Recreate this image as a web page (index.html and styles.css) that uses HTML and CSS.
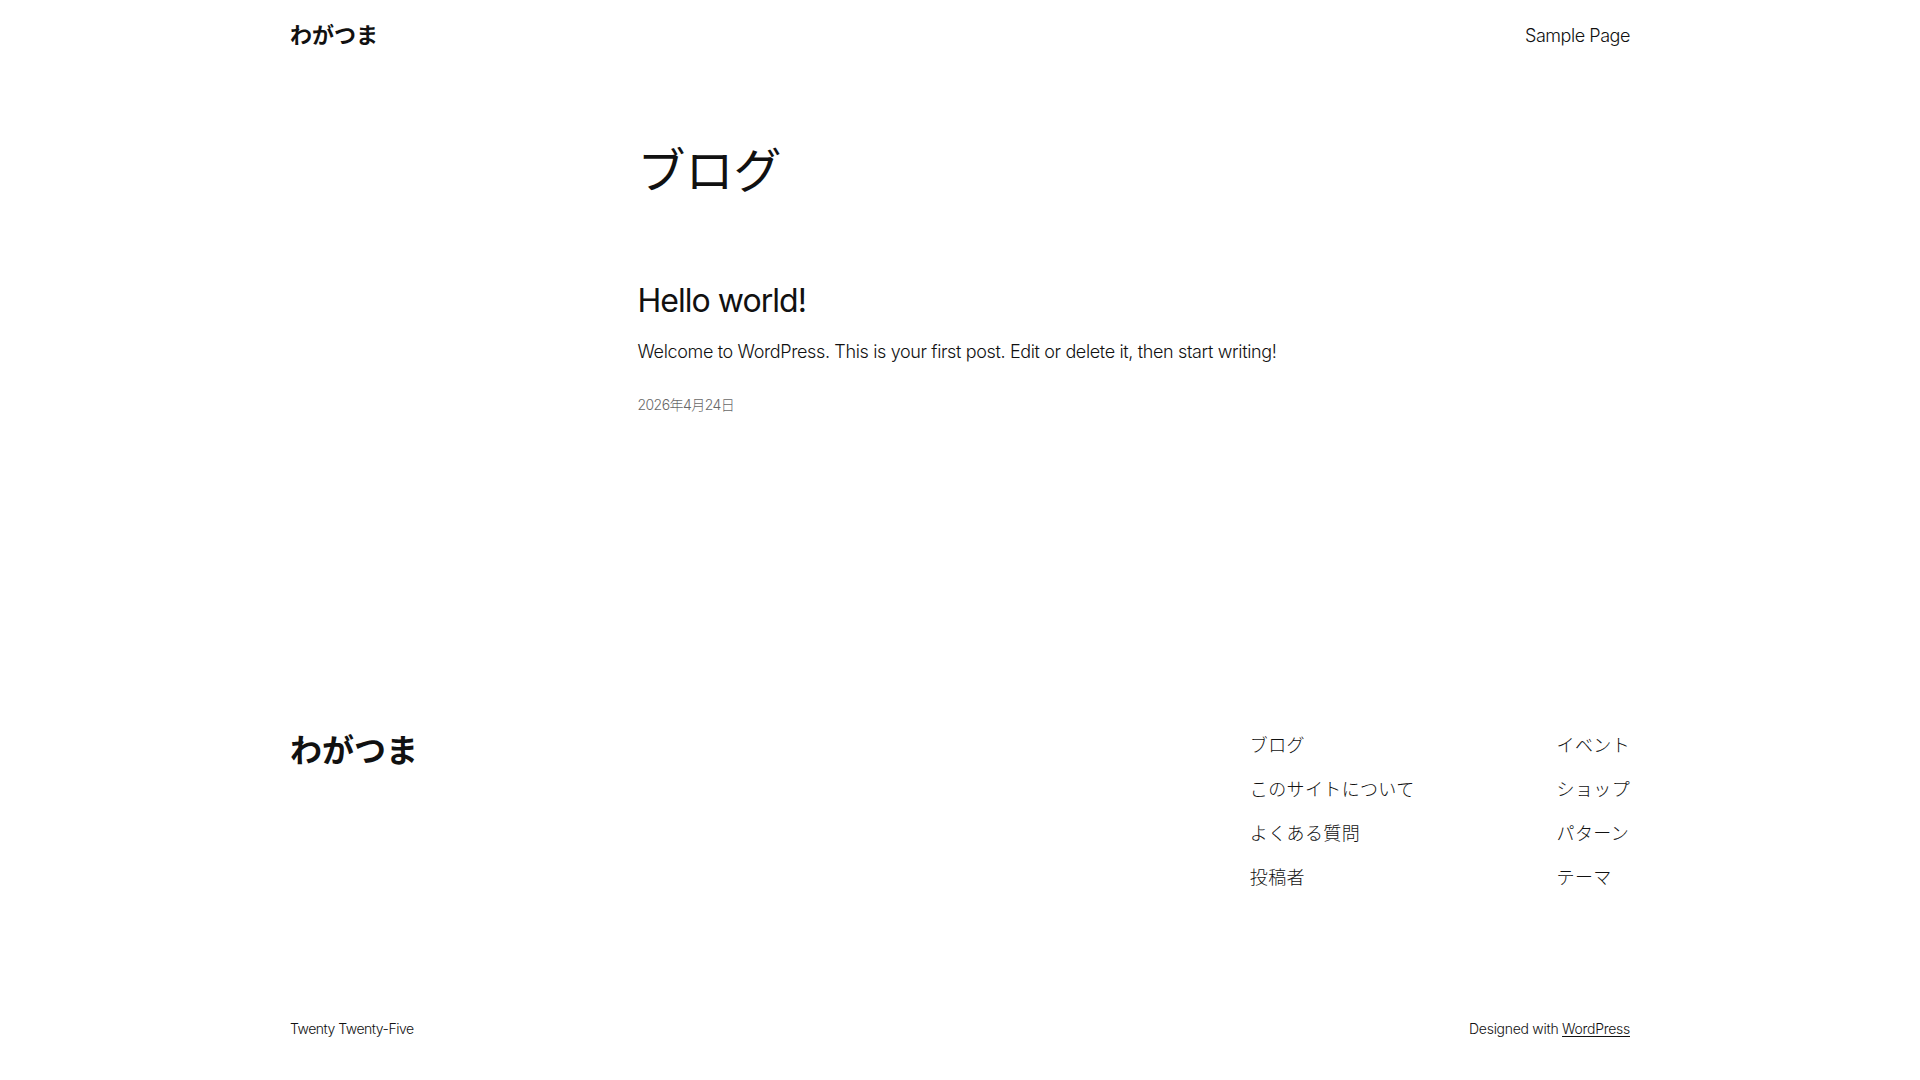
FILE: index.html
```html
<!DOCTYPE html>
<html lang="ja">
<head>
<meta charset="utf-8">
<title>ブログ – わがつま</title>
<link rel="stylesheet" href="styles.css">
</head>
<body>
<header class="site-header">
  <a class="site-title" href="#">わがつま</a>
  <nav class="header-nav"><a href="#">Sample Page</a></nav>
</header>
<main class="site-main">
  <h1 class="page-title">ブログ</h1>
  <article class="post">
    <h2 class="post-title"><a href="#">Hello world!</a></h2>
    <p class="post-excerpt">Welcome to WordPress. This is your first post. Edit or delete it, then start writing!</p>
    <time class="post-date">2026年4月24日</time>
  </article>
</main>
<footer class="site-footer">
  <div class="footer-top">
    <a class="footer-title" href="#">わがつま</a>
    <div class="footer-navs">
      <ul class="footer-nav">
        <li><a href="#">ブログ</a></li>
        <li><a href="#">このサイトについて</a></li>
        <li><a href="#">よくある質問</a></li>
        <li><a href="#">投稿者</a></li>
      </ul>
      <ul class="footer-nav">
        <li><a href="#">イベント</a></li>
        <li><a href="#">ショップ</a></li>
        <li><a href="#">パターン</a></li>
        <li><a href="#">テーマ</a></li>
      </ul>
    </div>
  </div>
  <div class="footer-bottom">
    <span class="credit-theme">Twenty Twenty-Five</span>
    <span class="credit-wp">Designed with <a href="#">WordPress</a></span>
  </div>
</footer>
</body>
</html>
```
FILE: styles.css
```css
html, body {
  margin: 0;
  padding: 0;
  background: #ffffff;
}
body {
  font-family: Inter, "Noto Sans CJK JP", sans-serif;
  font-weight: 300;
  color: #111111;
  -webkit-font-smoothing: antialiased;
}
a {
  color: inherit;
  text-decoration: none;
}
.site-header {
  width: 1340px;
  margin: 0 auto;
  height: 70px;
  display: flex;
  align-items: center;
  justify-content: space-between;
}
.site-title {
  font-size: 22px;
  font-weight: 700;
  line-height: 1.2;
}
.header-nav {
  font-size: 18px;
  line-height: 1.5;
  letter-spacing: -0.025em;
}
.site-main {
  width: 645px;
  margin: 0 auto;
  padding-top: 72px;
}
.page-title {
  margin: 0;
  font-size: 48px;
  font-weight: 400;
  line-height: 1.2;
}
.post {
  margin-top: 82px;
}
.post-title {
  margin: 0;
  font-size: 32px;
  font-weight: 400;
  line-height: 1.2;
  letter-spacing: -0.03em;
}
.post-excerpt {
  margin: 18px 0 0;
  font-size: 18px;
  line-height: 1.6;
  letter-spacing: -0.02em;
}
.post-date {
  display: block;
  margin-top: 28px;
  font-size: 14px;
  line-height: 1.4;
  color: #686868;
  letter-spacing: -0.04em;
}
.site-footer {
  width: 1340px;
  margin: 318px auto 0;
}
.footer-top {
  display: flex;
  justify-content: space-between;
  align-items: flex-start;
}
.footer-title {
  margin-top: 0;
  font-size: 32px;
  font-weight: 700;
  line-height: 1.2;
}
.footer-navs {
  display: flex;
  gap: 142px;
}
.footer-nav {
  list-style: none;
  margin: 0;
  padding: 0;
  display: flex;
  flex-direction: column;
  gap: 17px;
  font-size: 18px;
  line-height: 27px;
  letter-spacing: 0.02em;
}
.footer-bottom {
  margin-top: 128px;
  display: flex;
  justify-content: space-between;
  align-items: center;
  font-size: 14px;
  line-height: 20px;
}
.credit-theme {
  letter-spacing: -0.035em;
}
.credit-wp {
  letter-spacing: -0.02em;
}
.credit-wp a {
  text-decoration: underline;
  text-underline-offset: 2px;
}
```
